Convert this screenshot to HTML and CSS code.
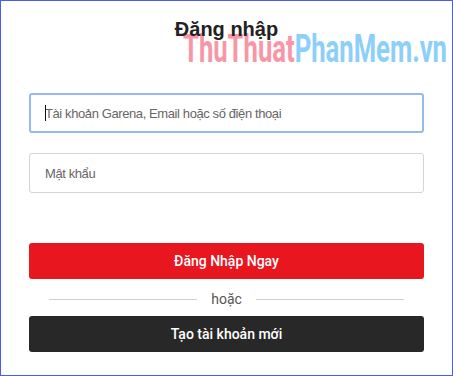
FILE: index.html
```html
<!DOCTYPE html>
<html lang="vi">
<head>
<meta charset="utf-8">
<title>Đăng nhập</title>
<link rel="stylesheet" href="styles.css">
</head>
<body>
<div class="frame">
  <div class="watermark"><span class="wm-pink">ThuThuat</span><span class="wm-blue">PhanMem.vn</span></div>
  <h1 class="title">Đăng nhập</h1>
  <form class="form">
    <div class="field field-focus">
      <input class="input input-focus" type="text" placeholder="Tài khoản Garena, Email hoặc số điện thoại">
      <span class="caret"></span>
    </div>
    <div class="field">
      <input class="input" type="password" placeholder="Mật khẩu">
    </div>
    <button type="button" class="btn btn-red">Đăng Nhập Ngay</button>
    <div class="divider"><span class="line"></span><span class="or">hoặc</span><span class="line"></span></div>
    <button type="button" class="btn btn-dark">Tạo tài khoản mới</button>
  </form>
</div>
</body>
</html>
```
FILE: styles.css
```css
* { box-sizing: border-box; }
html, body { margin: 0; padding: 0; background: #fff; }
.frame {
  position: relative;
  width: 453px;
  height: 376px;
  border: 1px solid #4b5cf6;
  padding: 16px 28px 0 28px;
  background: #fff;
  overflow: hidden;
}
.title {
  position: relative;
  margin: 0;
  font-family: "Liberation Sans", Arial, sans-serif;
  font-weight: 700;
  font-size: 20px;
  line-height: 24px;
  color: #222;
  text-align: center;
}
.watermark {
  position: absolute;
  left: 182px;
  top: 29px;
  font-family: Roboto, "Liberation Sans", sans-serif;
  font-weight: 700;
  font-size: 38px;
  line-height: 38px;
  white-space: nowrap;
  transform: scaleX(0.675);
  transform-origin: left top;
  pointer-events: none;
}
.wm-pink { color: #f896a6; }
.wm-blue { color: #8ccffa; }
.form {
  display: flex;
  flex-direction: column;
  margin-top: 52px;
}
.field { position: relative; height: 40px; }
.field + .field { margin-top: 20px; }
.input {
  display: block;
  width: 100%;
  height: 40px;
  margin: 0;
  border: 1px solid #d4d4d4;
  border-radius: 3px;
  padding: 0 0 0 15px;
  font-family: "Liberation Sans", Arial, sans-serif;
  font-size: 13px;
  letter-spacing: -0.4px;
  color: #333;
  background: #fff;
  outline: none;
}
.input::placeholder { color: #666; opacity: 1; }
.input-focus {
  border: 2px solid #98b8f5;
  padding-left: 14px;
}
.caret {
  position: absolute;
  left: 16px;
  top: 12px;
  width: 1px;
  height: 16px;
  background: #111;
}
.btn {
  display: flex;
  align-items: center;
  justify-content: center;
  width: 100%;
  height: 36px;
  border: 0;
  border-radius: 3px;
  padding: 0;
  font-family: Roboto, "Liberation Sans", sans-serif;
  font-weight: 500;
  font-size: 14px;
  color: #fff;
}
.btn-red { background: #e8161f; margin-top: 50px; }
.btn-dark { background: #282828; }
.divider {
  display: flex;
  align-items: center;
  height: 20px;
  margin: 10px 20px 7px 20px;
}
.line { flex: 1; height: 1px; background: #cfcfcf; }
.or {
  padding: 0 14px 0 14px;
  font-family: Roboto, "Liberation Sans", sans-serif;
  font-size: 14px;
  line-height: 20px;
  color: #555;
}
```
